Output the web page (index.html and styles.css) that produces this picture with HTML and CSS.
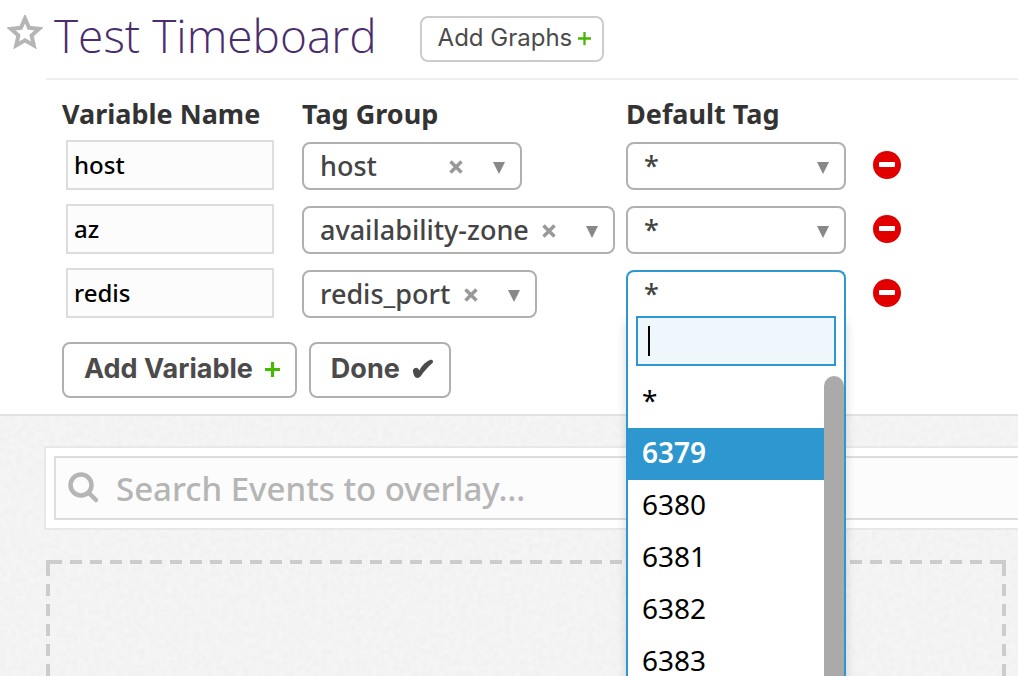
FILE: index.html
```html
<!DOCTYPE html>
<html lang="en">
<head>
<meta charset="utf-8">
<title>Test Timeboard</title>
<link rel="stylesheet" href="styles.css">
</head>
<body>
<svg class="sprites" aria-hidden="true">
  <symbol id="arrow" viewBox="0 0 14 18"><path d="M1 5h12L7 17z" fill="#888"/></symbol>
  <symbol id="cross" viewBox="0 0 14 16"><path d="M1.500 3.500l11 11M12.500 3.500l-11 11" stroke="#999" stroke-width="3.500"/></symbol>
  <symbol id="minus" viewBox="0 0 28 28"><circle cx="14" cy="14" r="14" fill="#e10000"/><rect x="6" y="11" width="16" height="5" rx="1" fill="#fff"/></symbol>
  <symbol id="plus" viewBox="0 0 14 14"><path d="M7 0v14M0 7h14" stroke="#47b800" stroke-width="2.500"/></symbol>
  <symbol id="plus-bold" viewBox="0 0 15 15"><path d="M7.500 0v15M0 7.500h15" stroke="#47b800" stroke-width="3.200"/></symbol>
</svg>
<header class="header">
  <button class="star" aria-label="Favorite"><svg width="36" height="34" viewBox="0 0 36 34"><path d="M18 3.500l4.100 9.300 10 1-7.500 6.700 2.200 9.900L18 25.300l-8.800 5.100 2.200-9.900L3.900 13.800l10-1z" fill="none" stroke="#b5b5b5" stroke-width="4"/></svg></button>
  <div class="heading">
    <h1 class="title">Test Timeboard</h1>
    <button class="button button-light">Add Graphs <svg width="13" height="13"><use href="#plus"/></svg></button>
  </div>
</header>
<section class="variables">
  <table class="grid">
    <thead><tr><th class="col-name">Variable Name</th><th class="col-group">Tag Group</th><th class="col-tag">Default Tag</th><th></th></tr></thead>
    <tbody>
      <tr>
        <td><input class="name" type="text" value="host" aria-label="Variable name 1"></td>
        <td><div class="combo"><select aria-label="Tag group 1"><option>host</option></select><button class="icon" aria-label="Clear"><svg width="14" height="16"><use href="#cross"/></svg></button><svg class="arrow" width="14" height="18"><use href="#arrow"/></svg></div></td>
        <td><div class="combo"><select aria-label="Default tag 1"><option>*</option></select><svg class="arrow" width="14" height="18"><use href="#arrow"/></svg></div></td>
        <td><button class="icon remove" aria-label="Remove host"><svg width="28" height="28"><use href="#minus"/></svg></button></td>
      </tr>
      <tr>
        <td><input class="name" type="text" value="az" aria-label="Variable name 2"></td>
        <td><div class="combo"><select aria-label="Tag group 2"><option>availability-zone</option></select><button class="icon" aria-label="Clear"><svg width="14" height="16"><use href="#cross"/></svg></button><svg class="arrow" width="14" height="18"><use href="#arrow"/></svg></div></td>
        <td><div class="combo"><select aria-label="Default tag 2"><option>*</option></select><svg class="arrow" width="14" height="18"><use href="#arrow"/></svg></div></td>
        <td><button class="icon remove" aria-label="Remove az"><svg width="28" height="28"><use href="#minus"/></svg></button></td>
      </tr>
      <tr>
        <td><input class="name" type="text" value="redis" aria-label="Variable name 3"></td>
        <td><div class="combo"><select aria-label="Tag group 3"><option>redis_port</option></select><button class="icon" aria-label="Clear"><svg width="14" height="16"><use href="#cross"/></svg></button><svg class="arrow" width="14" height="18"><use href="#arrow"/></svg></div></td>
        <td><div class="combo open"><select aria-label="Default tag 3"><option>*</option></select>
          <div class="dropdown">
            <input class="filter" type="text" aria-label="Filter tags">
            <div class="results">
              <ul class="options" role="listbox" aria-label="Tags">
                <li role="option">*</li>
                <li role="option" class="active" aria-selected="true">6379</li>
                <li role="option">6380</li>
                <li role="option">6381</li>
                <li role="option">6382</li>
                <li role="option">6383</li>
              </ul>
              <div class="thumb"></div>
            </div>
          </div></div></td>
        <td><button class="icon remove" aria-label="Remove redis"><svg width="28" height="28"><use href="#minus"/></svg></button></td>
      </tr>
    </tbody>
  </table>
  <div class="actions">
    <button class="button">Add Variable <svg class="gap" width="15" height="15"><use href="#plus-bold"/></svg></button>
    <button class="button">Done <svg class="gap" width="22" height="22" viewBox="0 0 24 22"><path d="M1 12.500C2 9 6.500 8.500 8 12.500 11 7 15 3 20 1q3.500-.5 2.800 3C17 9 13 14 9.500 19q-3 3-6 1C2 18 1 15 1 12.500z" fill="#4b4b4b"/></svg></button>
  </div>
</section>
<main class="board">
  <svg class="texture" aria-hidden="true"><filter id="grain" x="0" y="0" width="100%" height="100%" color-interpolation-filters="sRGB"><feTurbulence type="fractalNoise" baseFrequency="0.18" numOctaves="3" seed="4"/><feColorMatrix values="0.035 0 0 0 0.936  0.035 0 0 0 0.936  0.035 0 0 0 0.936  0 0 0 0 1"/></filter><rect width="100%" height="100%" filter="url(#grain)"/></svg>
  <div class="search-box">
    <label class="search">
      <svg width="32" height="32" viewBox="0 0 32 32" fill="none" stroke="#b5b5b5"><circle cx="13" cy="13" r="10.500" stroke-width="4.500"/><path d="M20.500 20.500l7.500 7.500" stroke-width="4.500" stroke-linecap="round"/></svg>
      <input type="text" placeholder="Search Events to overlay…" aria-label="Search events">
    </label>
  </div>
  <div class="dropzone"></div>
</main>
</body>
</html>
```
FILE: styles.css
```css
* { box-sizing: border-box; }
body {
  margin: 0;
  min-height: 100vh;
  display: flex;
  flex-direction: column;
  overflow: hidden;
  background: #fff;
  color: #333;
  font: 27px/36px "Noto Sans", "Open Sans", sans-serif;
}
button, input, select { font: inherit; color: inherit; margin: 0; }
.sprites { display: none; }
.star, .icon { display: flex; padding: 0; border: 0; background: none; }
.header { display: flex; align-items: flex-start; }
.star { margin: 15px 0 0 7px; }
.heading {
  flex: 1;
  display: flex;
  align-items: center;
  gap: 43px;
  height: 80px;
  margin-left: 3px;
  padding: 0 8px;
  border-bottom: 2px solid #eee;
}
.title { margin: 0; padding-bottom: 8px; font: 300 46px/70px "Open Sans", sans-serif; color: #4b2d6d; }
.button {
  display: flex;
  align-items: center;
  height: 56px;
  padding: 0 15px 2px 20px;
  border: 2px solid #b0b0b0;
  border-radius: 8px;
  background: #fff;
  color: #4b4b4b;
  font: 700 27px/32px Inter, sans-serif;
}
.button svg { margin-left: 6px; }
.button .gap { margin-left: 12px; }
.button-light { height: 46px; padding: 0 11px 2px 16px; border-color: #ccc; font-size: 24px; font-weight: 400; }
.variables { padding: 16px 0 16px 62px; border-bottom: 2px solid #e2e2e2; }
.grid { border-collapse: collapse; text-align: left; }
.grid th { padding: 0 0 2px; height: 38px; font-weight: 700; }
.grid td { padding: 0; height: 64px; }
.col-name { width: 240px; }
.col-group { width: 324px; }
.col-tag { width: 247px; }
.name {
  display: block;
  width: 208px;
  height: 50px;
  margin: 0 0 2px 4px;
  padding: 0 6px 2px;
  border: 2px solid #ddd;
  background: #fcfcfc;
  color: #000;
  font-size: 24px;
  font-weight: 500;
}
.combo {
  position: relative;
  display: flex;
  align-items: center;
  width: max-content;
  min-width: 220px;
  height: 48px;
  padding: 0 14px 0 16px;
  border: 2px solid #b0b0b0;
  border-radius: 8px;
  color: #444;
  font-weight: 500;
}
.combo select { flex: 1; height: 44px; padding: 0; border: 0; background: none; appearance: none; outline: 0; }
.combo .icon { margin-left: 13px; }
.arrow { margin-left: 29px; }
.remove { margin-bottom: 2px; }
.combo.open { border-color: #2e97cf; border-bottom-color: transparent; border-radius: 8px 8px 0 0; }
.dropdown {
  position: absolute;
  z-index: 2;
  top: 42px;
  left: -2px;
  right: -2px;
  border: 2px solid #2e97cf;
  border-top: 0;
  background: #fff;
  color: #000;
  font-weight: 400;
  box-shadow: 0 8px 10px rgba(0, 0, 0, .15);
}
.filter {
  display: block;
  width: calc(100% - 16px);
  height: 50px;
  margin: 2px 8px 10px;
  border: 2px solid #2e97cf;
  background: linear-gradient(#000, #000) 10px center / 2px 30px no-repeat #eef7fb;
  outline: 0;
}
.results { display: flex; }
.options { flex: 1; margin: 0; padding: 0; list-style: none; }
.options li { height: 52px; padding: 6px 14px; font-size: 28px; }
.options .active { background: #2e97cf; color: #fff; font-weight: 600; }
.thumb { width: 20px; border-radius: 10px; background: #aaa; }
.actions { display: flex; gap: 12px; margin-top: 16px; }
.board { position: relative; flex: 1; display: flex; flex-direction: column; padding-top: 30px; background: #f2f2f2; }
.texture { position: absolute; inset: 0; width: 100%; height: 100%; }
.search-box {
  position: relative;
  margin-left: 44px;
  padding: 8px 0 8px 8px;
  border: 2px solid #e8e8e8;
  border-right: 0;
  background: #fff;
}
.search {
  display: flex;
  align-items: center;
  gap: 16px;
  height: 64px;
  padding-left: 12px;
  border: 2px solid #ddd;
  border-right: 0;
  background: #fcfcfc;
  font-size: 33px;
  font-weight: 500;
}
.search input { flex: 1; min-width: 0; height: 60px; padding: 0; border: 0; background: none; }
.search input::placeholder { color: #b5b5b5; }
.dropzone {
  position: relative;
  flex: 1;
  margin: 30px 12px 0 46px;
  background:
    linear-gradient(#ccc, #ccc) 0 0 / 4px 4px no-repeat,
    linear-gradient(#ccc, #ccc) 100% 0 / 4px 4px no-repeat,
    repeating-linear-gradient(90deg, transparent 0 4px, #ccc 4px 16px, transparent 16px 20px) 0 0 / 100% 4px no-repeat,
    repeating-linear-gradient(transparent 0 4px, #ccc 4px 16px, transparent 16px 20px) 0 0 / 4px 100% no-repeat,
    repeating-linear-gradient(transparent 0 4px, #ccc 4px 16px, transparent 16px 20px) 100% 0 / 4px 100% no-repeat;
}
```
